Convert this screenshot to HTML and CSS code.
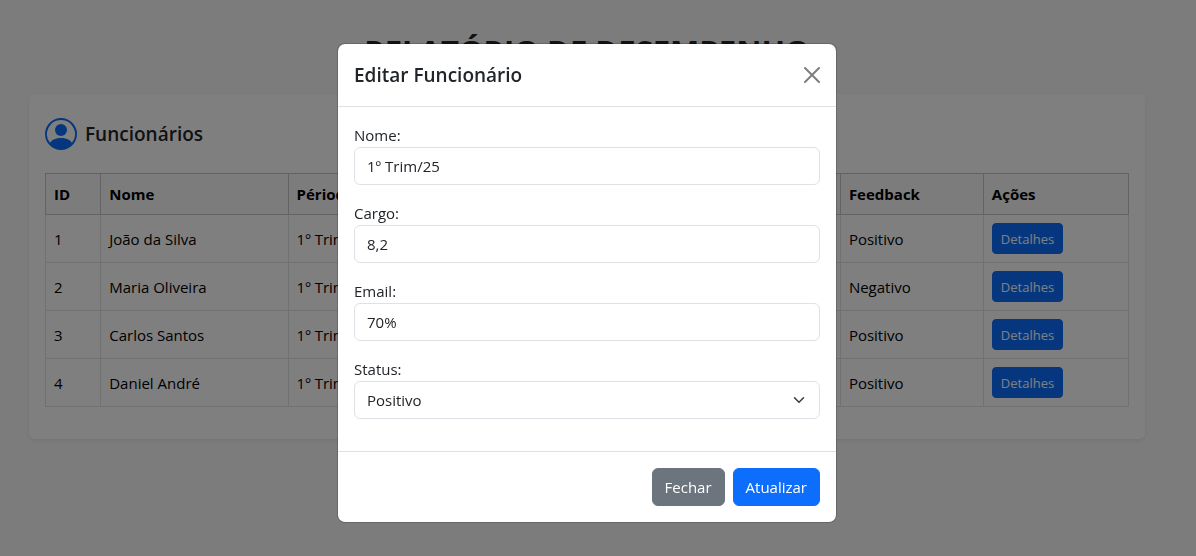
FILE: index.html
```html
<!DOCTYPE html>
<html lang="pt-BR">
<head>
<meta charset="utf-8">
<meta name="viewport" content="width=device-width, initial-scale=1">
<title>Relatório de Desempenho</title>
<link rel="stylesheet" href="styles.css">
</head>
<body>
<main class="page">
  <h1 class="page-title">Relatório de Desempenho</h1>
  <section class="card">
    <header class="card-header">
      <svg class="person-icon" viewBox="0 0 16 16" fill="currentColor" aria-hidden="true">
        <path d="M11 6a3 3 0 1 1-6 0 3 3 0 0 1 6 0"/>
        <path fill-rule="evenodd" d="M0 8a8 8 0 1 1 16 0A8 8 0 0 1 0 8m8-7a7 7 0 0 0-5.468 11.37C3.242 11.226 4.805 10 8 10s4.757 1.225 5.468 2.37A7 7 0 0 0 8 1"/>
      </svg>
      <h2 class="card-title">Funcionários</h2>
    </header>
    <table class="table">
      <colgroup>
        <col class="col-id"><col class="col-name"><col class="col-data"><col class="col-data"><col class="col-data"><col class="col-feedback"><col class="col-actions">
      </colgroup>
      <thead>
        <tr><th>ID</th><th>Nome</th><th>Périodo</th><th>Nota</th><th>Metas</th><th>Feedback</th><th>Ações</th></tr>
      </thead>
      <tbody>
        <tr><td>1</td><td>João da Silva</td><td>1º Trim/25</td><td>8,2</td><td>70%</td><td>Positivo</td><td><button class="btn btn-small btn-primary" type="button">Detalhes</button></td></tr>
        <tr><td>2</td><td>Maria Oliveira</td><td>1º Trim/25</td><td>8,2</td><td>70%</td><td>Negativo</td><td><button class="btn btn-small btn-primary" type="button">Detalhes</button></td></tr>
        <tr><td>3</td><td>Carlos Santos</td><td>1º Trim/25</td><td>8,2</td><td>70%</td><td>Positivo</td><td><button class="btn btn-small btn-primary" type="button">Detalhes</button></td></tr>
        <tr><td>4</td><td>Daniel André</td><td>1º Trim/25</td><td>8,2</td><td>70%</td><td>Positivo</td><td><button class="btn btn-small btn-primary" type="button">Detalhes</button></td></tr>
      </tbody>
    </table>
  </section>
</main>

<div class="overlay">
  <form class="modal" role="dialog" aria-modal="true" aria-labelledby="modal-title">
    <header class="modal-header">
      <h2 class="modal-title" id="modal-title">Editar Funcionário</h2>
      <button class="close" type="button" aria-label="Fechar janela">
        <svg class="close-icon" viewBox="0 0 16 16" aria-hidden="true"><path d="M.293.293a1 1 0 0 1 1.414 0L8 6.586 14.293.293a1 1 0 1 1 1.414 1.414L9.414 8l6.293 6.293a1 1 0 0 1-1.414 1.414L8 9.414l-6.293 6.293a1 1 0 0 1-1.414-1.414L6.586 8 .293 1.707a1 1 0 0 1 0-1.414"/></svg>
      </button>
    </header>
    <div class="modal-body">
      <div class="field">
        <label for="nome">Nome:</label>
        <input class="control" id="nome" type="text" value="1º Trim/25">
      </div>
      <div class="field">
        <label for="cargo">Cargo:</label>
        <input class="control" id="cargo" type="text" value="8,2">
      </div>
      <div class="field">
        <label for="email">Email:</label>
        <input class="control" id="email" type="text" value="70%">
      </div>
      <div class="field">
        <label for="status">Status:</label>
        <div class="select-wrap">
          <select class="control" id="status"><option>Positivo</option><option>Negativo</option></select>
          <svg class="chevron" viewBox="0 0 16 16" fill="none" stroke="#343a40" stroke-width="2" stroke-linecap="round" stroke-linejoin="round" aria-hidden="true"><path d="m2 5 6 6 6-6"/></svg>
        </div>
      </div>
    </div>
    <footer class="modal-footer">
      <button class="btn btn-secondary" type="button">Fechar</button>
      <button class="btn btn-primary" type="submit">Atualizar</button>
    </footer>
  </form>
</div>
</body>
</html>
```
FILE: styles.css
```css
*, *::before, *::after { box-sizing: border-box; }

body {
  margin: 0;
  background: #f8f9fa;
  color: #212529;
  font-family: "Segoe UI", "Open Sans", "Noto Sans", sans-serif;
  font-size: 15px;
  line-height: 24px;
}

h1, h2 { margin: 0; }

.page {
  box-sizing: content-box;
  max-width: 1116px;
  margin: 0 auto;
  padding: 32px 51px 24px 29px;
}

.page-title {
  margin-bottom: 24px;
  font-size: 31px;
  line-height: 38px;
  font-weight: 700;
  text-align: center;
  text-transform: uppercase;
}

.card {
  padding: 24px 16px 32px;
  border-radius: 6px;
  background: #fff;
  box-shadow: 0 2px 4px rgba(0, 0, 0, .075);
}

.card-header {
  display: flex;
  align-items: center;
  gap: 8px;
  margin-bottom: 23px;
}

.person-icon { width: 32px; height: 32px; color: #0d6efd; }

.card-title, .modal-title {
  font-size: 19px;
  line-height: 30px;
  font-weight: 600;
}

.table {
  width: 100%;
  table-layout: fixed;
  border-collapse: collapse;
  color: #000;
}

.col-id { width: 5.1%; }
.col-name { width: 17.3%; }
.col-data { width: 17%; }
.col-feedback { width: 13.2%; }
.col-actions { width: 13.4%; }

.table th, .table td {
  padding: 8px;
  border: 1px solid #dee2e6;
  text-align: left;
  vertical-align: middle;
}

.table th {
  border-color: #c6c7c8;
  background: #f8f9fa;
  font-weight: 700;
}

.btn {
  padding: 6px 12px;
  border: 1px solid transparent;
  border-radius: 6px;
  color: #fff;
  font: inherit;
  cursor: pointer;
}

.btn-small {
  display: block;
  padding: 5px 8px 4px;
  border-radius: 4px;
  font-size: 13px;
  line-height: 20px;
}

.btn-primary { border-color: #0d6efd; background: #0d6efd; }
.btn-secondary { border-color: #6c757d; background: #6c757d; }

.overlay {
  position: fixed;
  inset: 0;
  display: flex;
  align-items: flex-start;
  justify-content: center;
  padding: 43px 22px 32px 0;
  overflow: auto;
  background: rgba(0, 0, 0, .5);
}

.modal {
  width: 100%;
  max-width: 500px;
  border: 1px solid rgba(0, 0, 0, .175);
  border-radius: 8px;
  background: #fff;
  background-clip: padding-box;
}

.modal-header {
  display: flex;
  align-items: center;
  justify-content: space-between;
  padding: 16px;
  border-bottom: 1px solid #dee2e6;
}

.close {
  display: flex;
  padding: 0;
  border: 0;
  background: none;
  opacity: .5;
  cursor: pointer;
}

.close-icon { width: 16px; height: 16px; }

.modal-body { padding: 16px; }

.field { margin-bottom: 16px; }

.field label { display: block; }

.control {
  display: block;
  width: 100%;
  height: 38px;
  padding: 6px 12px;
  border: 1px solid #dee2e6;
  border-radius: 6px;
  background: #fff;
  color: #212529;
  font: inherit;
  appearance: none;
}

.select-wrap { position: relative; }

.chevron {
  position: absolute;
  top: 13px;
  right: 15px;
  width: 12px;
  height: 12px;
  pointer-events: none;
}

.modal-footer {
  display: flex;
  justify-content: flex-end;
  gap: 8px;
  padding: 16px;
  border-top: 1px solid #dee2e6;
}
```
